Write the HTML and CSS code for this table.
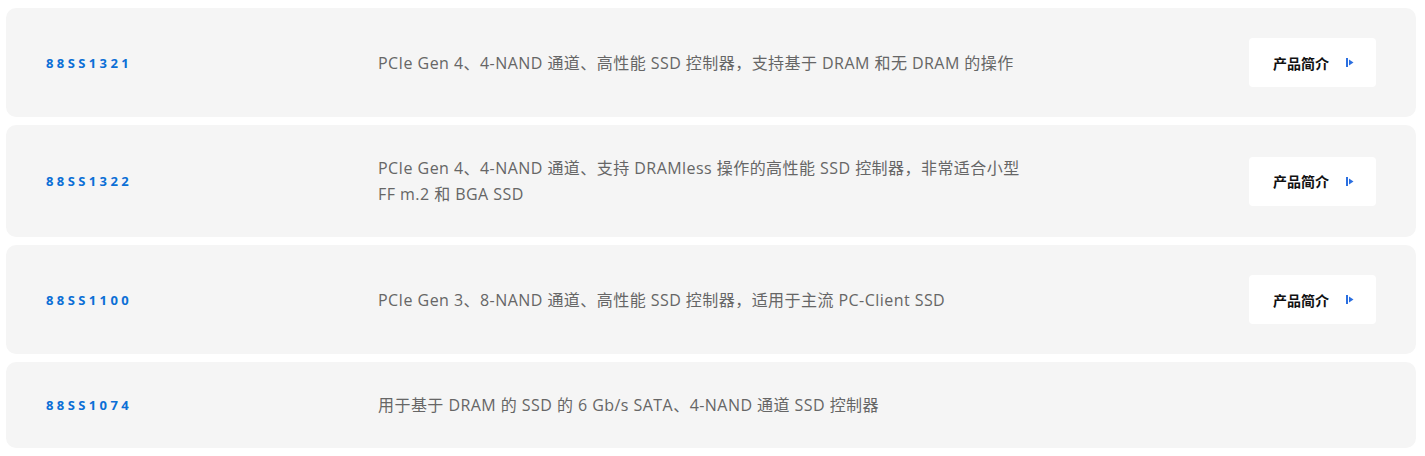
FILE: index.html
```html
<!DOCTYPE html>
<html lang="zh-CN">
<head>
<meta charset="utf-8">
<title>SSD 控制器</title>
<link rel="stylesheet" href="styles.css">
</head>
<body>
<div class="list">
  <div class="card">
    <div class="model">88SS1321</div>
    <div class="desc">PCIe Gen 4、4-NAND 通道、高性能 SSD 控制器，支持基于 DRAM 和无 DRAM 的操作</div>
    <a class="btn" href="#">产品简介<svg class="ic" width="8" height="9" viewBox="0 0 8 9"><rect x="0" y="0" width="2" height="9" fill="#2b6fe0"/><path d="M3 1.5 L7.5 4.5 L3 7.5 Z" fill="#2b6fe0"/></svg></a>
  </div>
  <div class="card">
    <div class="model">88SS1322</div>
    <div class="desc">PCIe Gen 4、4-NAND 通道、支持 DRAMless 操作的高性能 SSD 控制器，非常适合小型 FF m.2 和 BGA SSD</div>
    <a class="btn" href="#">产品简介<svg class="ic" width="8" height="9" viewBox="0 0 8 9"><rect x="0" y="0" width="2" height="9" fill="#2b6fe0"/><path d="M3 1.5 L7.5 4.5 L3 7.5 Z" fill="#2b6fe0"/></svg></a>
  </div>
  <div class="card">
    <div class="model">88SS1100</div>
    <div class="desc">PCIe Gen 3、8-NAND 通道、高性能 SSD 控制器，适用于主流 PC-Client SSD</div>
    <a class="btn" href="#">产品简介<svg class="ic" width="8" height="9" viewBox="0 0 8 9"><rect x="0" y="0" width="2" height="9" fill="#2b6fe0"/><path d="M3 1.5 L7.5 4.5 L3 7.5 Z" fill="#2b6fe0"/></svg></a>
  </div>
  <div class="card">
    <div class="model">88SS1074</div>
    <div class="desc">用于基于 DRAM 的 SSD 的 6 Gb/s SATA、4-NAND 通道 SSD 控制器</div>
  </div>
</div>
</body>
</html>
```
FILE: styles.css
```css
html, body {
  margin: 0;
  padding: 0;
  background: #ffffff;
}
.list {
  padding: 8px 9px 0 6px;
  display: flex;
  flex-direction: column;
  gap: 8px;
}
.card {
  background: #f5f5f5;
  border-radius: 10px;
  padding: 30px 40px;
  display: flex;
  align-items: center;
  min-height: 26px;
}
.model {
  width: 332px;
  flex: none;
  font-family: "Open Sans", "Noto Sans", sans-serif;
  font-weight: 700;
  font-size: 13px;
  letter-spacing: 3.4px;
  color: #0b6fd6;
}
.desc {
  width: 642px;
  font-family: "Open Sans", "Noto Sans CJK SC", sans-serif;
  font-size: 16px;
  line-height: 26px;
  letter-spacing: 0.45px;
  color: #666666;
}
.btn {
  margin-left: auto;
  width: 127px;
  height: 49px;
  box-sizing: border-box;
  padding: 0 22px 0 24px;
  background: #ffffff;
  border-radius: 4px;
  display: flex;
  align-items: center;
  justify-content: space-between;
  text-decoration: none;
  font-family: "Noto Sans CJK SC", sans-serif;
  font-weight: 700;
  font-size: 14px;
  color: #111111;
}
.ic {
  display: block;
}
```
